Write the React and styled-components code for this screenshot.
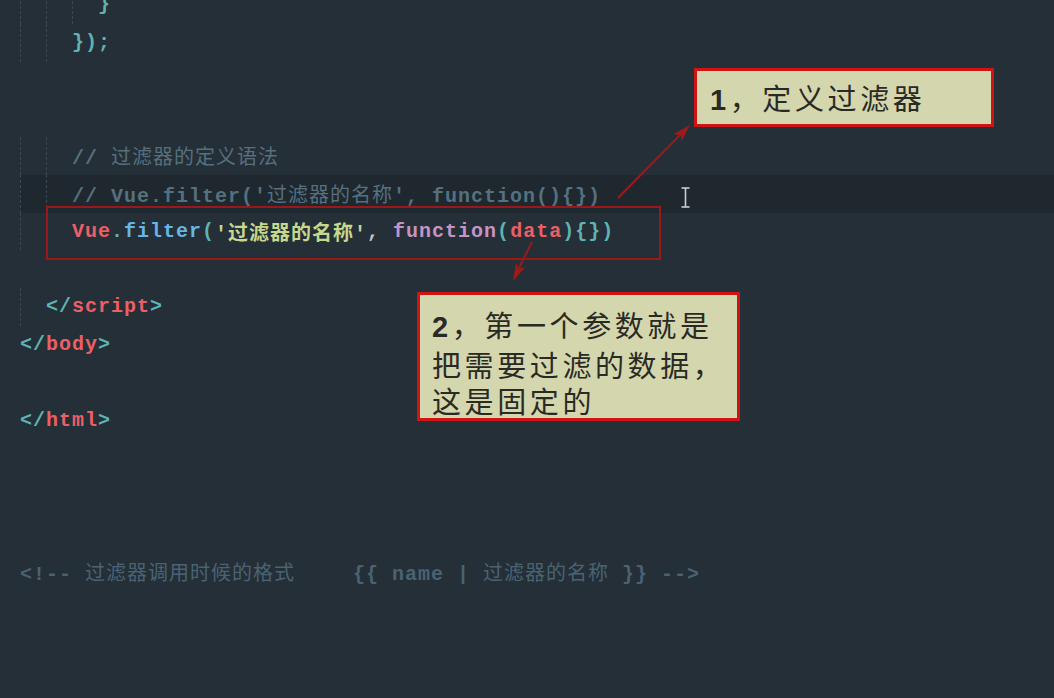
import React from 'react';
import styled, {createGlobalStyle} from 'styled-components';

const GlobalStyle = createGlobalStyle`
    body{
        margin: 0;
        background: #252f37;
    }
`

const COLORS = {
    punct: '#5fb3b3',
    tag: '#ec5f67',
    method: '#66b5e8',
    str: '#c6d78e',
    keyword: '#c594c5',
    plain: '#c0c5ce',
    comment: '#55707f',
    faded: '#4a6373',
};

const Editor = styled('div')`
    position: relative;
    width: 1054px;
    height: 698px;
    overflow: hidden;
    background: #252f37;
`

const Code = styled('div')`
    margin-top: -14px;
    padding-left: 20px;
    font-family: "Liberation Mono", "Noto Sans CJK SC", monospace;
    font-size: 20px;
    font-weight: 700;
    letter-spacing: 1px;
`

const Line = styled('div')`
    display: flex;
    align-items: center;
    height: 37.75px;
    white-space: pre;
    background: ${props => props.$active ? '#1f282f' : 'transparent'};
`

const Guide = styled('span')`
    flex: none;
    align-self: stretch;
    width: 25px;
    border-left: 1px dashed #3b4751;
`

const Tok = styled('span')`
    color: ${props => COLORS[props.$k]};
`

const Han = styled('span')`
    font-weight: 400;
`

const Gap = styled('span')`
    display: inline-block;
    width: ${props => props.$w}px;
`

const Mark = styled('div')`
    position: absolute;
    left: 46px;
    top: 206px;
    width: 615px;
    height: 54px;
    box-sizing: border-box;
    border: 2px solid #9c1717;
`

const Note = styled('div')`
    position: absolute;
    left: ${props => props.$x}px;
    top: ${props => props.$y}px;
    width: ${props => props.$w}px;
    height: ${props => props.$h}px;
    box-sizing: border-box;
    padding: ${props => props.$pad};
    background: #d4d6ad;
    border: 3px solid #d01414;
    font-family: "Noto Sans CJK SC", sans-serif;
    font-size: 29px;
    line-height: ${props => props.$lh}px;
    letter-spacing: 3.6px;
    color: #2a2a24;
    white-space: nowrap;
`

const Num = styled('span')`
    font-family: "Liberation Sans", sans-serif;
    font-weight: 700;
`

const Overlay = styled('svg')`
    position: absolute;
    left: 0;
    top: 0;
    pointer-events: none;
`

function Indent({n}){
    return Array.from({length: n}).map((_, i) => <Guide key={i}/>);
}

function App(){
    return(
        <Editor>
            <GlobalStyle/>
            <Code>
                <Line><Indent n={3}/><Tok $k="punct">{'}'}</Tok></Line>
                <Line><Indent n={2}/><Tok $k="punct">{'});'}</Tok></Line>
                <Line/>
                <Line/>
                <Line>
                    <Indent n={2}/>
                    <Tok $k="comment">{'// '}<Han>过滤器的定义语法</Han></Tok>
                </Line>
                <Line $active>
                    <Indent n={2}/>
                    <Tok $k="comment">{"// Vue.filter('"}<Han>过滤器的名称</Han>{"', function(){})"}</Tok>
                </Line>
                <Line>
                    <Indent n={2}/>
                    <Tok $k="tag">Vue</Tok>
                    <Tok $k="punct">.</Tok>
                    <Tok $k="method">filter</Tok>
                    <Tok $k="punct">(</Tok>
                    <Tok $k="str">'过滤器的名称'</Tok>
                    <Tok $k="plain">{', '}</Tok>
                    <Tok $k="keyword">function</Tok>
                    <Tok $k="punct">(</Tok>
                    <Tok $k="tag">data</Tok>
                    <Tok $k="punct">{'){})'}</Tok>
                </Line>
                <Line/>
                <Line>
                    <Indent n={1}/>
                    <Tok $k="punct">{'</'}</Tok><Tok $k="tag">script</Tok><Tok $k="punct">{'>'}</Tok>
                </Line>
                <Line>
                    <Tok $k="punct">{'</'}</Tok><Tok $k="tag">body</Tok><Tok $k="punct">{'>'}</Tok>
                </Line>
                <Line/>
                <Line>
                    <Tok $k="punct">{'</'}</Tok><Tok $k="tag">html</Tok><Tok $k="punct">{'>'}</Tok>
                </Line>
                <Line/>
                <Line/>
                <Line/>
                <Line>
                    <Tok $k="faded">{'<!-- '}<Han>过滤器调用时候的格式</Han></Tok>
                    <Gap $w={58}/>
                    <Tok $k="faded">{'{{ name | '}<Han>过滤器的名称</Han>{' }} -->'}</Tok>
                </Line>
            </Code>

            <Mark/>

            <Note $x={694} $y={68} $w={300} $h={59} $lh={53} $pad="0 0 0 13px">
                <Num>1</Num>，定义过滤器
            </Note>

            <Note $x={417} $y={292} $w={323} $h={129} $lh={36.5} $pad="11px 0 0 12px">
                <Num>2</Num>，第一个参数就是<br/>
                把需要过滤的数据，<br/>
                这是固定的
            </Note>

            <Overlay width="1054" height="698" viewBox="0 0 1054 698">
                <line x1="618" y1="198" x2="680" y2="135" stroke="#9b1a1a" strokeWidth="2"/>
                <polygon points="690,125 681.5,141.5 681,135.5 673.5,134" fill="#9b1a1a"/>
                <line x1="532" y1="242" x2="518" y2="270" stroke="#9b1a1a" strokeWidth="2"/>
                <polygon points="513,281 516,262.5 518.7,268.5 525.5,267" fill="#9b1a1a"/>
                <g stroke="#c9cdd1" strokeWidth="1.6" fill="none">
                    <line x1="685.5" y1="188" x2="685.5" y2="207"/>
                    <line x1="681.5" y1="188" x2="689.5" y2="188"/>
                    <line x1="681.5" y1="207" x2="689.5" y2="207"/>
                </g>
            </Overlay>
        </Editor>
    )
}

export default App;
